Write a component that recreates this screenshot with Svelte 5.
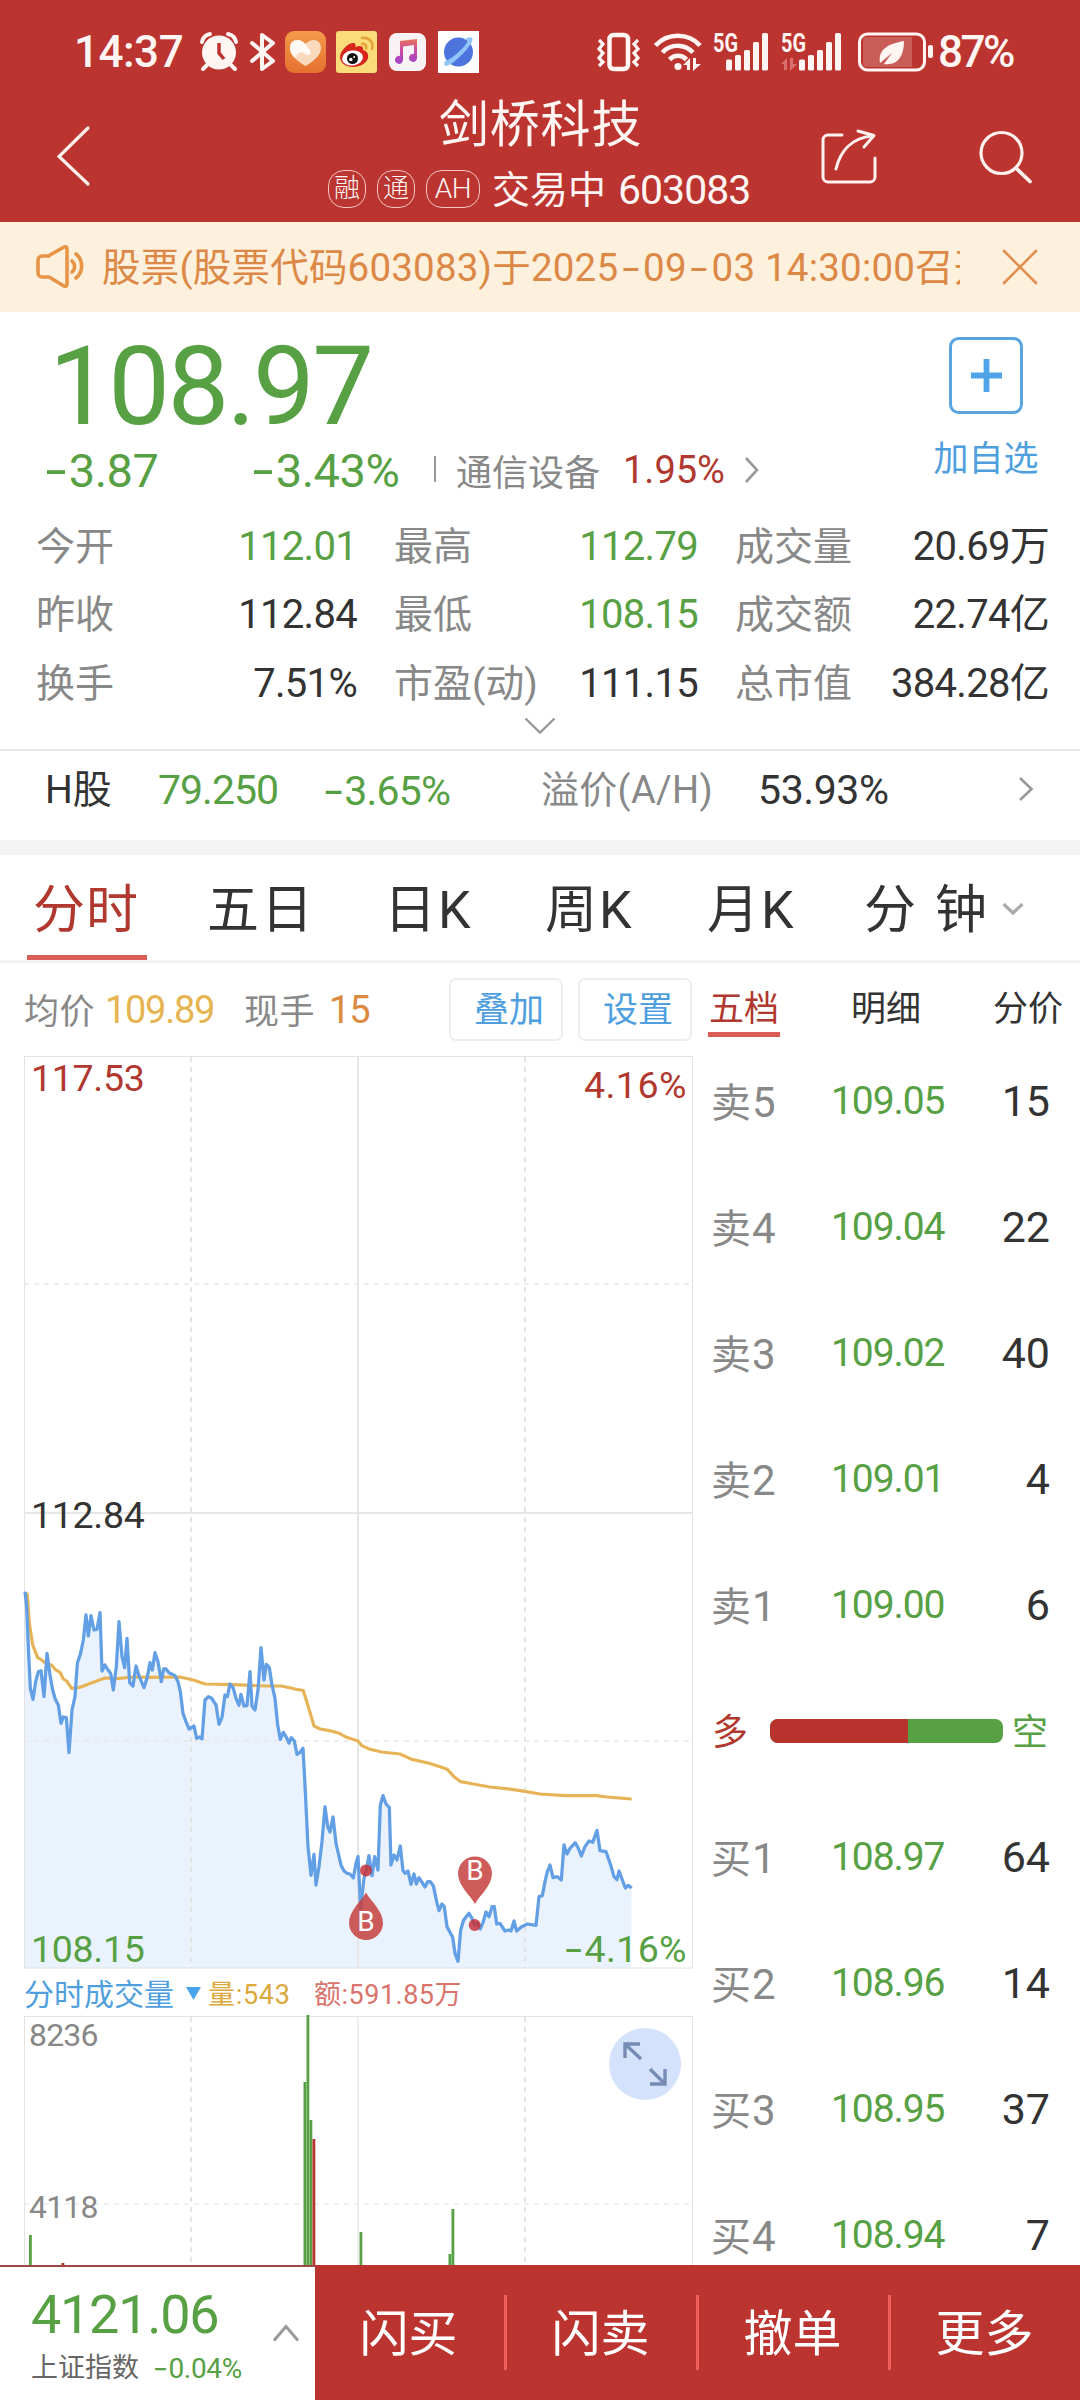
<script>
  const stats = [
    ['今开', '112.01', 'down'], ['最高', '112.79', 'down'], ['成交量', '20.69万', ''],
    ['昨收', '112.84', ''], ['最低', '108.15', 'down'], ['成交额', '22.74亿', ''],
    ['换手', '7.51%', ''], ['市盈(动)', '111.15', ''], ['总市值', '384.28亿', '']
  ];
  const sells = [['卖', 5, '109.05', 15], ['卖', 4, '109.04', 22], ['卖', 3, '109.02', 40], ['卖', 2, '109.01', 4], ['卖', 1, '109.00', 6]];
  const buys = [['买', 1, '108.97', 64], ['买', 2, '108.96', 14], ['买', 3, '108.95', 37], ['买', 4, '108.94', 7]];

  // Intraday series, three units to the pixel
  const price = '75,335 80,380 85,500 91,625 99,658 107,605 115,575 123,572 132,650 141,520 150,585 158,630 166,658 175,675 183,730 190,711 199,713 207,818 216,690 225,650 232,550 241,523 250,480 258,405 265,468 273,407 282,450 291,448 300,398 306,573 315,555 324,570 332,580 340,630 349,560 357,425 366,530 374,563 381,475 389,608 399,618 408,558 418,590 432,623 441,595 450,548 457,570 465,518 474,545 484,605 491,567 498,567 507,578 525,587 534,605 541,635 549,700 558,725 567,747 582,738 590,775 599,771 606,777 615,660 625,650 635,655 648,675 657,733 666,712 675,645 682,650 690,612 699,622 708,655 717,676 723,643 732,678 741,677 750,575 756,678 765,690 774,630 783,503 792,600 799,553 808,563 816,615 825,655 833,735 841,778 850,757 858,770 867,789 874,773 883,783 891,823 899,818 909,805 916,935 924,1100 933,1186 942,1123 948,1215 957,1160 966,1085 975,980 983,1040 990,1056 999,1011 1008,1090 1023,1155 1032,1173 1041,1180 1050,1182 1060,1194 1068,1150 1074,1130 1082,1285 1092,1195 1100,1165 1107,1127 1116,1187 1124,1130 1134,1170 1141,975 1149,947 1158,972 1168,982 1173,1155 1182,1125 1191,1140 1201,1098 1209,1172 1216,1180 1224,1173 1233,1213 1242,1182 1249,1212 1257,1193 1275,1221 1283,1205 1291,1205 1300,1217 1310,1265 1317,1292 1326,1272 1333,1280 1341,1340 1358,1372 1365,1420 1374,1444 1382,1350 1391,1320 1407,1300 1416,1315 1424,1335 1432,1330 1441,1347 1450,1325 1458,1296 1467,1310 1476,1280 1483,1280 1490,1332 1500,1330 1515,1353 1525,1350 1533,1353 1542,1323 1550,1353 1565,1340 1582,1332 1608,1336 1617,1250 1627,1247 1635,1205 1642,1175 1650,1155 1659,1193 1672,1190 1684,1200 1692,1095 1701,1122 1710,1105 1726,1088 1735,1105 1744,1128 1755,1100 1767,1083 1778,1087 1791,1051 1800,1112 1818,1115 1832,1155 1842,1190 1851,1199 1857,1173 1876,1224 1885,1216 1895,1224';
  const average = '78,338 82,345 88,430 98,495 113,533 125,540 140,552 155,555 165,568 180,577 190,597 200,603 215,625 240,622 280,607 315,594 350,596 400,591 450,592 540,591 580,600 615,612 700,614 800,618 845,618 885,627 910,632 925,680 942,738 960,747 990,752 1018,760 1040,772 1074,783 1086,797 1110,808 1145,816 1200,822 1235,838 1285,849 1320,860 1342,868 1362,890 1382,905 1420,912 1470,921 1535,928 1575,934 1620,942 1695,947 1790,947 1820,951 1895,957';
  const volumes = [[29, 2235, 'g'], [61.5, 2263, 'r'], [303.5, 2082, 'g'], [306.5, 2015, 'g'], [309.5, 2120, 'g'], [312.5, 2139, 'r'], [359.5, 2232, 'g'], [448.5, 2254, 'g'], [451.5, 2209, 'g']];
</script>

{#snippet num(t)}{#each t.split(/(-)/) as part}{#if part === '-'}<span class="minus">-</span>{:else}{part}{/if}{/each}{/snippet}

{#snippet signal(dim)}
  <svg width="62" height="40" viewBox="0 0 62 40">
    <text x="0" y="20" class="fiveg" textLength="25" lengthAdjust="spacingAndGlyphs">5G</text>
    <g fill={dim ? '#d9706b' : 'none'}><path d="M0 32l6-6v12h-3v-6zM9 26h3v6h4l-7 7z" /></g>
    <g fill="#fff5f3">
      <rect x={dim ? 18 : 13} y="27.5" width="6" height="11" rx="1.5" />
      <rect x={dim ? 27 : 22} y="23" width="6" height="15.5" rx="1.5" />
      <rect x={dim ? 36 : 31} y="18" width="6" height="20.5" rx="1.5" />
      <rect x={dim ? 45 : 40} y="10" width="6" height="28.5" rx="1.5" />
      <rect x={dim ? 54 : 49} y="1" width="6" height="37.5" rx="1.5" />
    </g>
  </svg>
{/snippet}

{#snippet book(r)}
  <div class="brow"><span class="side">{r[0]}<b>{r[1]}</b></span><span class="bprice">{r[2]}</span><span class="qty">{r[3]}</span></div>
{/snippet}

<div class="app">
  <div class="top">
    <div class="status">
      <span class="clock">14:37</span>
      <svg class="i-alarm" width="38" height="40" viewBox="0 0 38 40">
        <circle cx="19" cy="20.5" r="17" fill="#fff5f3" />
        <path d="M2 10a10 10 0 0 1 8-8M36 10a10 10 0 0 0-8-8" stroke="#fff5f3" stroke-width="4" fill="none" stroke-linecap="round" />
        <path d="M7 33l-4 4M31 33l4 4" stroke="#fff5f3" stroke-width="4" stroke-linecap="round" />
        <path d="M19 11v10l5 6" stroke="#bb342f" stroke-width="3.5" fill="none" />
      </svg>
      <svg class="i-bt" width="26" height="40" viewBox="0 0 26 40">
        <path d="M2 11l21 18-11 8V3l11 8L2 29" stroke="#fff5f3" stroke-width="4" fill="none" stroke-linejoin="round" stroke-linecap="round" />
      </svg>
      <svg class="i-heart" width="41" height="42" viewBox="0 0 41 42">
        <defs><linearGradient id="og" x2="0" y2="1"><stop stop-color="#f49a4b" /><stop offset="1" stop-color="#e5712f" /></linearGradient></defs>
        <rect width="41" height="42" rx="9" fill="url(#og)" />
        <path d="M20.500 35C14 31 5 25 5 17c0-8 9-11 15.500-4C27 6 36 9 36 17c0 8-9 14-15.500 18z" fill="#fbd9bd" />
        <path d="M20.500 13C14 6 5 9 5 17c0 4 2 7 5 10 2-5 6-8 10-4 4 3 8-1 4-5z" fill="#fffaf5" />
      </svg>
      <svg class="i-weibo" width="41" height="42" viewBox="0 0 41 42">
        <rect width="41" height="42" rx="3" fill="#fbdc7b" />
        <path d="M4 26c0-6 8-14 13-14 3 0 3 2 2 4 5-2 9-1 8 3 4 1 6 4 5 8-1 5-8 9-15 9S4 32 4 26z" fill="#d8261f" />
        <ellipse cx="16.500" cy="27" rx="10.500" ry="7.500" fill="#fff" transform="rotate(-8 16.500 27)" />
        <circle cx="16.500" cy="27.500" r="5.500" fill="#111" /><circle cx="14.800" cy="28.500" r="1.800" fill="#fff" /><circle cx="18.200" cy="26" r="1" fill="#fff" />
        <path d="M26 7c7-1 12 4 10 11M26 13c3-.5 5 1.500 4 4.500" stroke="#e3a43a" stroke-width="2.600" fill="none" stroke-linecap="round" />
      </svg>
      <svg class="i-music" width="37" height="38" viewBox="0 0 37 38">
        <defs><linearGradient id="mg" x2="0" y2="1"><stop stop-color="#e8745b" /><stop offset=".5" stop-color="#c948a9" /><stop offset="1" stop-color="#9b45c9" /></linearGradient></defs>
        <rect width="37" height="38" rx="8" fill="#f8f2f4" />
        <path d="M11 8l17-2v19a4 4 0 1 1-3-4V12l-11 1.500V27a4 4 0 1 1-3-4z" fill="url(#mg)" />
      </svg>
      <svg class="i-planet" width="41" height="42" viewBox="0 0 41 42">
        <rect width="41" height="42" fill="#fff" />
        <circle cx="20.500" cy="21" r="14.500" fill="#4d74dc" />
        <path d="M7 30C4 37 10 36 17 30S35 13 34.500 8c-.4-3-5-2-9 1 5-1 5 1 1 6S12 29 7 30z" fill="#8fc6f7" />
      </svg>
      <svg class="i-vib" width="43" height="40" viewBox="0 0 43 40">
        <rect x="12.500" y="3" width="18.500" height="34" rx="4" fill="none" stroke="#fff5f3" stroke-width="4.500" />
        <path d="M2 8l4 4-4 5 4 4-4 5 4 4-4 4M41 8l-4 4 4 5-4 4 4 5-4 4 4 4" stroke="#fff5f3" stroke-width="3.200" fill="none" />
      </svg>
      <svg class="i-wifi" width="48" height="40" viewBox="0 0 48 40">
        <g stroke="#fff5f3" stroke-width="4.600" fill="none"><path d="M1.500 13.500c12-13 33-13 44.500 0M8.500 20.500c8-9 22-9 30.500 0M15.500 27.500c5-5 12-5 17-0" /></g>
        <circle cx="24" cy="34.500" r="3.600" fill="#fff5f3" />
        <path d="M29 33l7-7v12h-3v-5zM39 26h3v6h5l-8 7z" fill="#fff5f3" />
      </svg>
      <span class="i-s1">{@render signal(false)}</span>
      <span class="i-s2">{@render signal(true)}</span>
      <svg class="i-bat" width="76" height="40" viewBox="0 0 76 40">
        <rect x="1.500" y="2" width="65" height="36" rx="8" fill="none" stroke="#fff5f3" stroke-width="3" />
        <path d="M9 5h45v30H9a4 4 0 0 1-4-4V9a4 4 0 0 1 4-4z" fill="#c95e59" />
        <path d="M22 31c-2-14 8-19 24-22 0 16-7 25-20 23l8-11z" fill="#fff5f3" />
        <rect x="70" y="13" width="5" height="13" rx="2" fill="#fff5f3" />
      </svg>
      <span class="pct">87%</span>
    </div>
    <div class="nav">
      <svg class="back" width="36" height="62" viewBox="0 0 36 62"><path d="M33 3L4 31.500 33 59" fill="none" stroke="#fff1ee" stroke-width="3.200" stroke-linecap="round" /></svg>
      <div class="title">
        <div class="name">剑桥科技</div>
        <div class="sub"><span class="pill">融</span><span class="pill">通</span><span class="pill ah">AH</span><span class="state">交易中</span><span class="code">603083</span></div>
      </div>
      <svg class="share" width="56" height="56" viewBox="0 0 56 56">
        <path d="M22 6H8a5 5 0 0 0-5 5v37a5 5 0 0 0 5 5h42a5 5 0 0 0 5-5V29M16 40C20 23 31 9 52 7M38 2l16 4.500L44 18" transform="translate(-1 0)" fill="none" stroke="#fff1ee" stroke-width="3" stroke-linecap="round" stroke-linejoin="round" />
      </svg>
      <svg class="search" width="54" height="56" viewBox="0 0 54 56"><circle cx="22.500" cy="24" r="20.500" fill="none" stroke="#fff1ee" stroke-width="3.200" /><path d="M37 39l14 13.500" stroke="#fff1ee" stroke-width="3.800" stroke-linecap="round" /></svg>
    </div>
  </div>

  <div class="notice">
    <svg width="48" height="44" viewBox="0 0 48 44"><g fill="none" stroke="#e89447" stroke-width="3.600" stroke-linecap="round" stroke-linejoin="round">
      <path d="M13 11H6a4 4 0 0 0-4 4v13a4 4 0 0 0 4 4h7l15 9q3 1 3-2V4q0-3-3-2L14 10M36 16c3.500 3 3.500 8 0 11M40 9c7.500 6 7.500 18 0 24" /></g></svg>
    <div class="ntext">{@render num('股票(股票代码603083)于2025-09-03 14:30:00召开')}</div>
    <svg class="close" width="36" height="36" viewBox="0 0 36 36"><path d="M2 2l32 32M34 2L2 34" stroke="#e08f4c" stroke-width="2.600" stroke-linecap="round" /></svg>
  </div>

  <div class="quote">
    <div class="qhead">
      <div class="qleft">
        <div class="big down">108.97</div>
        <div class="chg">
          <span class="c1 down">{@render num('-3.87')}</span><span class="c2 down">{@render num('-3.43%')}</span><i></i>
          <span class="sector">通信设备</span><span class="c3 up">1.95%</span>
          <svg width="16" height="28" viewBox="0 0 16 28"><path d="M2 2l11 12L2 26" fill="none" stroke="#999" stroke-width="2.600" /></svg>
        </div>
      </div>
      <div class="add">
        <svg width="74" height="77" viewBox="0 0 74 77"><rect x="1.500" y="1.500" width="71" height="74" rx="8" fill="none" stroke="#5aa5e0" stroke-width="3" /><path d="M22 38.500h31M37.500 22v33" stroke="#4fa3e8" stroke-width="5.800" /></svg>
        <span>加自选</span>
      </div>
    </div>
    <div class="stats">
      {#each stats as s}<span class="lab">{s[0]}</span><span class="val {s[2]}">{s[1]}</span>{/each}
    </div>
    <svg class="more" width="32" height="18" viewBox="0 0 32 18"><path d="M1.500 1.500L16 15.500 30.500 1.500" fill="none" stroke="#999" stroke-width="2.400" /></svg>
  </div>

  <div class="hrow">
    <span class="h1">H股</span><span class="h2 down">79.250</span><span class="h3 down">{@render num('-3.65%')}</span>
    <span class="h4">溢价(A/H)</span><span class="h5">53.93%</span>
    <svg width="16" height="26" viewBox="0 0 16 26"><path d="M2 2l11.500 11L2 24" fill="none" stroke="#999" stroke-width="2.600" /></svg>
  </div>

  <div class="tabs">
    <span class="t1 on">分时</span><span class="t2">五日</span><span class="t3">日K</span><span class="t4">周K</span><span class="t5">月K</span><span class="t6">分</span><span class="t7">钟</span>
    <svg width="22" height="14" viewBox="0 0 22 14"><path d="M1.500 2l9.500 9L20.500 2" fill="none" stroke="#aaa" stroke-width="3.200" /></svg>
  </div>

  <div class="main">
    <div class="left">
      <div class="info">
        <span class="k1">均价</span><span class="avg">109.89</span><span class="k2">现手</span><span class="lot">15</span>
        <span class="btn">叠加</span><span class="btn b2">设置</span>
      </div>
      <div class="chart">
        <svg width="700" height="914" viewBox="0 1055 700 914">
          <g transform="translate(0 1480) scale(.33333)">
            <polygon points="75,1465 {price} 1893,1465" fill="#eaf3fd" />
          </g>
          <g fill="none" stroke="#e2e2e2">
            <rect x="24.500" y="1056.500" width="668" height="911.500" />
            <path d="M358 1056v912M24 1513h668" stroke-width="2" stroke="#e6e6e6" />
            <path d="M191 1057v911M525 1057v911" stroke-width="1.800" stroke-dasharray="5 5" />
            <path d="M24 1284h668M24 1741h668" stroke-width="1.600" stroke="#e8e8e8" stroke-dasharray="5 5" />
          </g>
          <g transform="translate(0 1480) scale(.33333)" fill="none" stroke-linejoin="round">
            <polyline points={average} stroke="#e6b456" stroke-width="9.500" />
            <polyline points={price} stroke="#629fe5" stroke-width="9.800" />
          </g>
          <g fill="#c5333a" fill-opacity=".85"><circle cx="366" cy="1870.500" r="6" /><circle cx="474.700" cy="1925" r="6" /></g>
          <g fill="#c63f3d" fill-opacity=".85">
            <path d="M366 1892.500c4 8 17 18 17 30.500a17 17 0 0 1-34 0c0-12.500 13-22.500 17-30.500z" />
            <path d="M475 1904c-4-8-17-18-17-30.500a17 17 0 0 1 34 0c0 12.500-13 22.500-17 30.500z" />
          </g>
          <g class="pin"><text x="366" y="1931">B</text><text x="475" y="1880">B</text></g>
        </svg>
        <span class="cl hi up">117.53</span><span class="cl hip up">4.16%</span><span class="cl mid">112.84</span>
        <span class="cl lo down">108.15</span><span class="cl lop down">{@render num('-4.16%')}</span>
      </div>
      <div class="vinfo"><span class="v1">分时成交量</span><svg width="15" height="13" viewBox="0 0 15 13"><path d="M0 0h15L7.500 13z" fill="#4aa4ec" /></svg><span class="v2">量:543</span><span class="v3">额:591.85万</span></div>
      <div class="vol">
        <svg width="700" height="250" viewBox="0 2015 700 250">
          <g fill="none" stroke="#e2e2e2">
            <rect x="24.500" y="2016.500" width="668" height="400" />
            <path d="M358 2016v250" stroke-width="1.500" stroke="#e8e8e8" />
            <path d="M191 2017v250M525 2017v250" stroke-width="1.800" stroke-dasharray="5 5" />
            <path d="M24 2204h668" stroke-width="1.600" stroke="#eaeaea" stroke-dasharray="5 5" />
          </g>
          {#each volumes as v}<rect x={v[0]} y={v[1]} width="2.800" height={2266 - v[1]} fill={v[2] === 'g' ? '#57a044' : '#b8352f'} />{/each}
          <circle cx="645" cy="2064" r="36" fill="#d5e2fb" />
          <path d="M641 2059l-16-15M625 2058v-14h15M650 2069l15 15M650 2084h15v-15" fill="none" stroke="#768cb3" stroke-width="3.400" />
        </svg>
        <span class="vl va">8236</span><span class="vl vb">4118</span>
      </div>
    </div>
    <div class="right">
      <div class="btabs"><span class="on">五档</span><span>明细</span><span>分价</span></div>
      {#each sells as r}{@render book(r)}{/each}
      <div class="brow ratio"><span class="up">多</span><div class="bar"><i></i></div><span class="down">空</span></div>
      {#each buys as r}{@render book(r)}{/each}
    </div>
  </div>

  <div class="bottom">
    <div class="index">
      <div class="idx"><div class="ival down">4121.06</div><div class="iname"><span>上证指数</span><span class="ipct down">{@render num('-0.04%')}</span></div></div>
      <svg width="28" height="18" viewBox="0 0 28 18"><path d="M2 16.500L14 2.500l12 14" fill="none" stroke="#999" stroke-width="3" /></svg>
    </div>
    <div class="acts"><span>闪买</span><i></i><span>闪卖</span><i></i><span>撤单</span><i></i><span>更多</span></div>
  </div>
</div>

<style>
  :global(body) { background: #fff; }
  .app { width: 1080px; height: 2400px; overflow: hidden; display: flex; flex-direction: column; background: #fff; color: #333; font-family: Roboto, "Noto Sans CJK SC", sans-serif; white-space: nowrap; }
  .app :global(svg) { display: block; flex: none; overflow: visible; }
  .vol :global(svg) { overflow: hidden; }
  span { flex: none; }
  .minus { font-family: Inter, sans-serif; display: inline-block; transform: scaleX(1.2); margin: 0 .05em; }
  .down { color: #57a044; }
  .up { color: #b0382f; }
  .top { height: 222px; background: #bb342f; color: #fff5f3; flex: none; }
  .status { height: 93px; padding: 10px 0 0 74px; box-sizing: border-box; display: flex; align-items: center; }
  .clock, .pct { font-size: 44px; line-height: 44px; font-weight: 500; }
  .clock { width: 126px; letter-spacing: -.5px; }
  .i-bt { margin-left: 12px; }
  .i-heart { margin-left: 9px; }
  .i-weibo { margin-left: 10px; }
  .i-music { margin-left: 12px; }
  .i-planet { margin-left: 12px; }
  .i-vib { margin-left: 118px; }
  .i-wifi { margin-left: 14px; }
  .i-s1 { margin-left: 11px; }
  .i-s2 { margin-left: 6px; }
  .i-bat { margin-left: 15px; }
  .pct { margin-left: 4px; letter-spacing: -2.500px; }
  .fiveg { font: 700 26px Roboto; fill: #fff5f3; }
  .nav { height: 129px; display: flex; align-items: flex-start; }
  .back { margin: 32px 0 0 55px; }
  .title { margin-left: 234px; width: 430px; text-align: left; }
  .name { font-size: 50px; line-height: 60px; padding: 2px 0 0 114px; letter-spacing: .8px; }
  .sub { margin-top: 14px; display: flex; align-items: center; height: 40px; padding-left: 3px; }
  .pill { width: 38px; height: 38px; box-sizing: border-box; border: 1.500px solid #f3c4c0; border-radius: 16px; font-size: 26px; line-height: 35px; text-align: center; margin-right: 11px; font-weight: 300; }
  .ah { width: 54px; font-size: 28px; margin-right: 12px; letter-spacing: -.5px; }
  .state { font-size: 38px; line-height: 40px; padding-top: 2px; }
  .code { font-size: 41px; line-height: 40px; margin-left: 12px; letter-spacing: -1px; padding-top: 2px; }
  .share { margin: 36px 0 0 66px; }
  .search { margin: 36px 0 0 102px; }
  .notice { height: 90px; background: #fdf0dd; flex: none; display: flex; align-items: center; padding-left: 36px; color: #dc8846; }
  .ntext { margin-left: 18px; width: 858px; overflow: hidden; font-size: 38.500px; line-height: 60px; letter-spacing: .2px; }
  .ntext .minus, .ntext :global(.minus) { margin: 0 .09em; }
  .close { margin-left: 42px; }
  .quote { height: 439px; flex: none; border-bottom: 2px solid #e8e8e8; box-sizing: border-box; }
  .qhead { height: 198px; display: flex; }
  .qleft { width: 926px; }
  .big { font-size: 110px; line-height: 110px; padding: 20px 0 0 49px; letter-spacing: -2.600px; height: 132px; box-sizing: border-box; }
  .chg { display: flex; align-items: center; height: 50px; }
  .c1, .c2 { font-size: 47px; letter-spacing: -.5px; }
  .c1 { padding-left: 43px; width: 207px; box-sizing: border-box; margin-right: 43px; }
  .c2 { width: 184px; }
  .chg i { width: 2px; height: 26px; background: #999; }
  .sector { font-size: 36px; color: #888; margin-left: 20px; width: 167px; padding-top: 2px; }
  .c3 { font-size: 38px; letter-spacing: 0; width: 121px; padding-top: 2px; }
  .chg svg { margin-top: 2px; }
  .add { width: 120px; padding-top: 25px; display: flex; flex-direction: column; align-items: center; }
  .add span { font-size: 35px; line-height: 44px; margin-top: 24px; color: #4f9fdf; }
  .stats { display: grid; grid-template-columns: 190px 131px 189px 152px 175px 176px; grid-auto-rows: 68.500px; padding: 2.500px 0 0 36px; line-height: 68.500px; }
  .stats .lab { font-size: 39px; color: #888; }
  .stats .val { font-size: 40px; letter-spacing: -.7px; text-align: right; }
  .stats .lab:nth-child(6n + 3), .stats .lab:nth-child(6n + 5) { padding-left: 37px; }
  .more { margin: -1px auto 0; }
  .hrow { height: 89px; flex: none; border-bottom: 15px solid #f4f4f4; display: flex; align-items: flex-start; line-height: 78px; }
  .h1 { font-size: 39px; margin-left: 45px; width: 113px; }
  .h2, .h3, .h5 { font-size: 41px; letter-spacing: -1px; }
  .h2 { width: 164px; }
  .h3 { width: 219px; letter-spacing: -.8px; }
  .h4 { font-size: 38px; color: #888; width: 217px; letter-spacing: .3px; }
  .h5 { width: 260px; letter-spacing: -.4px; }
  .hrow svg { margin-top: 25px; }
  .tabs { height: 105px; flex: none; border-bottom: 3px solid #f2f2f2; display: grid; grid-template-columns: 147px 176px 178px 163px 174px 97px 67px 22px; font-size: 52px; align-items: start; }
  .tabs span { height: 105px; box-sizing: border-box; line-height: 111px; letter-spacing: 2px; }
  .t1 { padding-left: 34px; }
  .t2 { padding-left: 60px; }
  .t3 { padding-left: 61px; }
  .t4 { padding-left: 44px; }
  .t5 { padding-left: 43px; }
  .t6 { padding-left: 26px; }
  .tabs svg { margin-top: 47px; }
  .tabs .on { color: #b0382f; border-bottom: 5px solid #db5c54; margin-left: 27px; padding-left: 6px; letter-spacing: 1px; }
  .main { height: 1302px; flex: none; display: flex; overflow: hidden; }
  .left { width: 700px; }
  .info { height: 92px; display: flex; align-items: center; font-size: 35px; color: #888; box-sizing: border-box; }
  .k1, .k2 { letter-spacing: .6px; padding-bottom: 1px; }
  .k1 { margin-left: 24px; width: 81px; }
  .avg, .lot { font-size: 38px; letter-spacing: -1px; padding-top: 2px; }
  .avg { color: #e6b450; letter-spacing: -1.300px; width: 139px; }
  .k2 { width: 85px; }
  .lot { color: #dc8a42; width: 120px; }
  .btn { width: 114px; height: 63px; line-height: 61px; border: 2px solid #eee; border-radius: 7px; box-sizing: border-box; text-align: center; color: #4f9fdf; padding-left: 6px; }
  .b2 { margin-left: 15px; padding-left: 6px; }
  .chart { height: 914px; position: relative; }
  .cl { position: absolute; font-size: 37.500px; line-height: 40px; letter-spacing: -.3px; }
  .hi { left: 31px; top: 3px; }
  .hip { right: 13px; top: 10px; letter-spacing: .5px; }
  .mid { left: 31px; top: 440px; }
  .lo { left: 31px; top: 874px; }
  .lop { right: 13px; top: 874px; letter-spacing: .4px; }
  .pin { font: 28px Roboto; fill: #fff; text-anchor: middle; }
  .vinfo { height: 46px; display: flex; align-items: center; font-size: 27px; padding-left: 24px; line-height: 44px; }
  .vinfo span { padding-top: 6px; }
  .v1 { font-size: 30px; color: #4f9fdf; width: 162px; }
  .vinfo svg { margin-top: 3px; }
  .v2 { color: #dba83c; margin-left: 7px; width: 106px; letter-spacing: .7px; }
  .v3 { color: #d9736b; letter-spacing: .5px; }
  .vol { height: 250px; position: relative; overflow: hidden; }
  .vl { position: absolute; left: 29px; font-size: 32px; line-height: 34px; color: #888; letter-spacing: -.8px; }
  .va { top: 3px; }
  .vb { top: 175px; }
  .right { width: 380px; }
  .btabs { display: grid; grid-template-columns: 72px 72px 72px; column-gap: 70px; padding: 15px 0 0 8px; height: 75px; box-sizing: border-box; font-size: 35px; line-height: 64px; text-align: center; }
  .btabs span { height: 59px; box-sizing: border-box; }
  .btabs .on { color: #b0382f; border-bottom: 5px solid #db5c54; }
  .brow { height: 126px; display: flex; align-items: center; }
  .side { font-size: 40px; color: #888; margin-left: 11px; width: 120px; padding-bottom: 3px; }
  .side b { font-weight: 400; font-size: 42px; margin-left: 1px; }
  .bprice { color: #57a044; font-size: 39px; letter-spacing: -1.100px; width: 115px; }
  .qty { font-size: 43px; width: 104px; text-align: right; }
  .ratio { font-size: 36px; }
  .ratio span { padding-bottom: 4px; }
  .ratio span:first-child { margin-left: 12px; width: 58px; }
  .bar { width: 233px; height: 24px; border-radius: 8px; background: #57a044; overflow: hidden; margin-right: 9px; }
  .bar i { display: block; width: 138px; height: 24px; background: #b8332d; }
  .bottom { height: 135px; flex: none; display: flex; }
  .index { width: 315px; border-top: 2px solid #9a4a42; box-sizing: border-box; display: flex; align-items: flex-start; background: #fff; }
  .idx { width: 272px; padding-left: 31px; box-sizing: border-box; }
  .ival { font-size: 54px; line-height: 60px; margin-top: 18px; letter-spacing: -1.300px; }
  .iname { font-size: 27px; line-height: 44px; color: #666; margin-top: 1px; display: flex; }
  .ipct { font-size: 28px; margin-left: 14px; letter-spacing: -.3px; }
  .index svg { margin-top: 57px; }
  .acts { width: 765px; background: #bb342f; color: #fff; display: flex; align-items: center; font-size: 49px; }
  .acts span { width: 189px; text-align: center; line-height: 135px; padding: 3px 2px 0 0; box-sizing: border-box; }
  .acts i { width: 3px; height: 75px; background: #f0605a; }
</style>
